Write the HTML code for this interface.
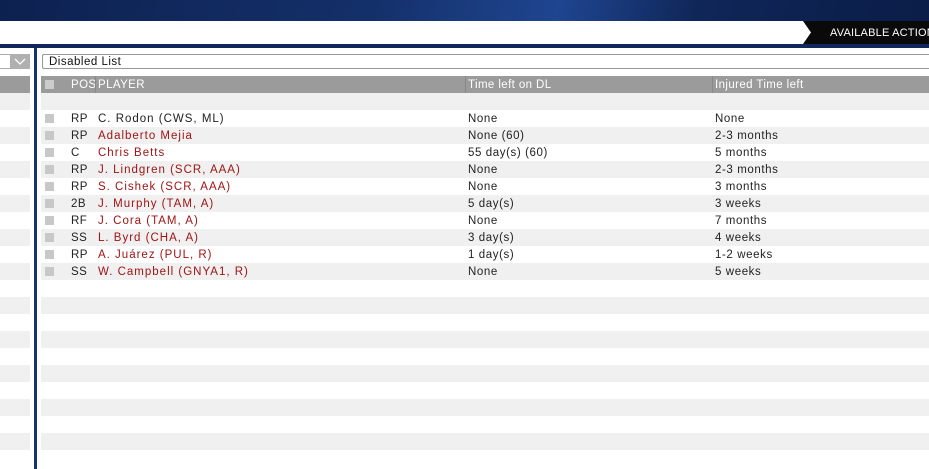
<!DOCTYPE html><html><head><style>
body{margin:0;width:929px;height:469px;overflow:hidden;background:#fff;font-family:"Liberation Sans",sans-serif;font-size:11.5px;letter-spacing:1px;position:relative}
.a{position:absolute}
.row{position:absolute;height:17px;line-height:18px;color:#222;white-space:nowrap}
.r{color:#a01414}
</style></head><body>
<div class="a" style="left:0;top:0;width:929px;height:21px;background:linear-gradient(100deg,#0d2150 0%,#14306a 40%,#1f4590 60%,#0f2658 75%,#0b1d48 100%)"></div>
<div class="a" style="left:0;top:44px;width:929px;height:4px;background:#13285a"></div>
<svg class="a" style="left:803px;top:21px" width="126" height="23"><polygon points="0,0 126,0 126,23 0,23 8,11.5" fill="#0a0a0a"/></svg>
<div class="a" style="left:830px;top:21px;height:23px;line-height:24px;color:#fff;white-space:nowrap;letter-spacing:0.2px;font-size:11px">AVAILABLE ACTION</div>
<div class="a" style="left:34px;top:48px;width:3px;height:421px;background:#16336f"></div>
<div class="a" style="left:0;top:54px;width:30px;height:15px;background:#fff;border:1px solid #aaa;border-left:none;box-sizing:border-box"></div>
<div class="a" style="left:10px;top:54px;width:20px;height:15px;background:#b0b0b0"></div>
<svg class="a" style="left:13px;top:57px" width="14" height="9"><polyline points="2,2 7,7 12,2" fill="none" stroke="#fff" stroke-width="1.3"/></svg>
<div class="a" style="left:42px;top:54px;width:887px;height:15px;border:1px solid #999;border-right:none;border-radius:2px 0 0 2px;box-sizing:border-box;line-height:14px;padding-left:6px;color:#111;letter-spacing:0.5px">Disabled List</div>
<div class="a" style="left:0;top:76px;width:30px;height:17px;background:#9b9b9b"></div>
<div class="a" style="left:41px;top:76px;width:888px;height:17px;background:#9b9b9b;color:#fff;line-height:18px;white-space:nowrap;letter-spacing:0.4px">
<div class="a" style="left:4px;top:4px;width:9px;height:9px;background:#ccc"></div>
<span class="a" style="left:30px">POS</span><div class="a" style="left:54px;top:0;width:1px;height:17px;background:#888"></div><span class="a" style="left:57px">PLAYER</span>
<div class="a" style="left:424px;top:0;width:1px;height:17px;background:#888"></div><span class="a" style="left:427px">Time left on DL</span>
<div class="a" style="left:671px;top:0;width:1px;height:17px;background:#888"></div><span class="a" style="left:674px">Injured Time left</span>
</div>
<div id="rows"></div>
<script>
var d=[["RP","C. Rodon (CWS, ML)",0,"None","None"],["RP","Adalberto Mejia",1,"None (60)","2-3 months"],["C","Chris Betts",1,"55 day(s) (60)","5 months"],["RP","J. Lindgren (SCR, AAA)",1,"None","2-3 months"],["RP","S. Cishek (SCR, AAA)",1,"None","3 months"],["2B","J. Murphy (TAM, A)",1,"5 day(s)","3 weeks"],["RF","J. Cora (TAM, A)",1,"None","7 months"],["SS","L. Byrd (CHA, A)",1,"3 day(s)","4 weeks"],["RP","A. Juárez (PUL, R)",1,"1 day(s)","1-2 weeks"],["SS","W. Campbell (GNYA1, R)",1,"None","5 weeks"]];
var h="";
for(var i=0;i<22;i++){var y=93+17*i;if(i%2==0){h+='<div class="a" style="left:0;top:'+y+'px;width:30px;height:17px;background:#f0f0f0"></div><div class="a" style="left:41px;top:'+y+'px;width:888px;height:17px;background:#f0f0f0"></div>';}
var r=d[i-1];if(i>=1&&r){h+='<div class="a" style="left:45px;top:'+(y+4)+'px;width:9px;height:9px;background:#c8c8c8"></div><div class="row" style="left:71px;top:'+y+'px;letter-spacing:0.5px">'+r[0]+'</div><div class="row'+(r[2]?' r':'')+'" style="left:98px;top:'+y+'px">'+r[1]+'</div><div class="row" style="left:468px;top:'+y+'px;letter-spacing:0.6px">'+r[3]+'</div><div class="row" style="left:715px;top:'+y+'px;letter-spacing:0.6px">'+r[4]+'</div>';}}
document.getElementById("rows").innerHTML=h;
</script>
</body></html>
